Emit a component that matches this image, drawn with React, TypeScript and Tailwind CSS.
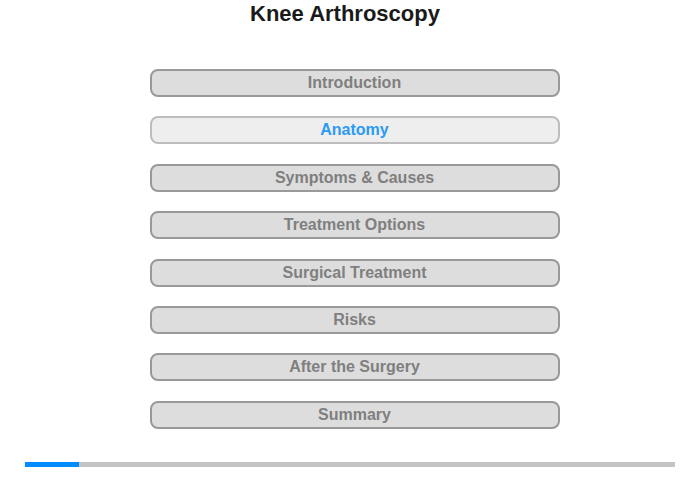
const chapters = [
  "Introduction",
  "Anatomy",
  "Symptoms & Causes",
  "Treatment Options",
  "Surgical Treatment",
  "Risks",
  "After the Surgery",
  "Summary",
];

export default function App() {
  const active = 1;
  return (
    <div className="w-[700px] h-[480px] bg-white font-['Liberation_Sans',Arial,sans-serif] flex flex-col">
      <h1 className="text-center text-[22px] font-bold text-[#1a1a1a] pt-[1px] leading-[26px] mr-[10px]">
        Knee Arthroscopy
      </h1>
      <div className="mt-[42px] flex flex-col items-center gap-[19.4px] pl-[9px]">
        {chapters.map((c, i) => (
          <button
            key={c}
            className={
              i === active
                ? "w-[410px] h-[28px] rounded-[8px] border-2 border-[#bdbdbd] bg-[#eeeeee] text-[#2a9af5] text-[16px] font-bold leading-none"
                : "w-[410px] h-[28px] rounded-[8px] border-2 border-[#999999] bg-[#dddddd] text-[#7f7f7f] text-[16px] font-bold leading-none"
            }
          >
            {c}
          </button>
        ))}
      </div>
      <div className="mt-[33px] mx-[25px] h-[5px] bg-[#c4c4c4] flex">
        <div className="w-[54px] h-full bg-[#008bff]" />
      </div>
    </div>
  );
}
